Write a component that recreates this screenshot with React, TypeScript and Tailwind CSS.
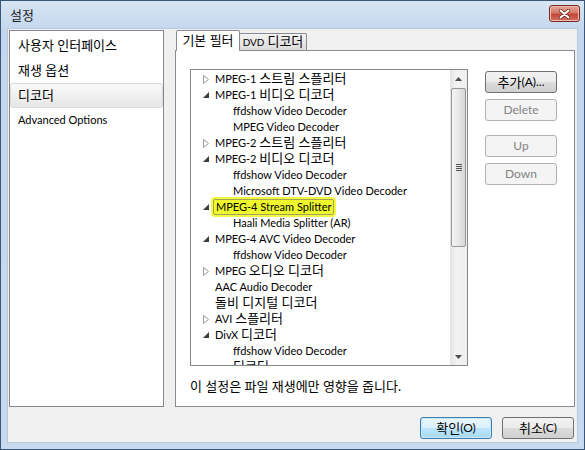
import type { ReactNode } from 'react'

// splits a label so that hangul runs get the slightly larger size they have in the dialog
function Txt({ s }: { s: string }) {
  const parts = s.split(/([\uAC00-\uD7A3][\uAC00-\uD7A3 ]*)/)
  return (
    <>
      {parts.map((p, i) =>
        /[\uAC00-\uD7A3]/.test(p) ? (
          <span key={i} className="text-[13px]">
            {p}
          </span>
        ) : (
          p
        )
      )}
    </>
  )
}

type Row = { text: string; level: 0 | 1; arrow?: 'open' | 'closed'; mark?: boolean }

const rows: Row[] = [
  { text: 'MPEG-1 스트림 스플리터', level: 0, arrow: 'closed' },
  { text: 'MPEG-1 비디오 디코더', level: 0, arrow: 'open' },
  { text: 'ffdshow Video Decoder', level: 1 },
  { text: 'MPEG Video Decoder', level: 1 },
  { text: 'MPEG-2 스트림 스플리터', level: 0, arrow: 'closed' },
  { text: 'MPEG-2 비디오 디코더', level: 0, arrow: 'open' },
  { text: 'ffdshow Video Decoder', level: 1 },
  { text: 'Microsoft DTV-DVD Video Decoder', level: 1 },
  { text: 'MPEG-4 Stream Splitter', level: 0, arrow: 'open', mark: true },
  { text: 'Haali Media Splitter (AR)', level: 1 },
  { text: 'MPEG-4 AVC Video Decoder', level: 0, arrow: 'open' },
  { text: 'ffdshow Video Decoder', level: 1 },
  { text: 'MPEG 오디오 디코더', level: 0, arrow: 'closed' },
  { text: 'AAC Audio Decoder', level: 0 },
  { text: '돌비 디지털 디코더', level: 0 },
  { text: 'AVI 스플리터', level: 0, arrow: 'closed' },
  { text: 'DivX 디코더', level: 0, arrow: 'open' },
  { text: 'ffdshow Video Decoder', level: 1 },
  { text: '디코더', level: 1 },
]

function Arrow({ kind }: { kind?: 'open' | 'closed' }) {
  if (kind === 'closed')
    return (
      <svg width="6" height="9" viewBox="0 0 6 9">
        <path d="M0.5 0.5 L5.5 4.5 L0.5 8.5 Z" fill="white" stroke="#9a9a9a" strokeWidth="1" />
      </svg>
    )
  if (kind === 'open')
    return (
      <svg width="6" height="6" viewBox="0 0 6 6">
        <path d="M6 0 L6 6 L0 6 Z" fill="#3c3c3c" />
      </svg>
    )
  return null
}

function Btn({ children, disabled, primary }: { children: ReactNode; disabled?: boolean; primary?: boolean }) {
  let cls =
    'border-[#707070] bg-[linear-gradient(#f2f2f2_0%,#ebebeb_50%,#dddddd_50%,#cfcfcf_100%)] text-black'
  if (disabled) cls = 'border-[#adb2b5] bg-[#f4f4f4] text-[#838383]'
  if (primary)
    cls =
      'border-[#3c7fb1] bg-[linear-gradient(#eaf6fd_0%,#d9f0fc_50%,#bee6fd_50%,#a7d9f5_100%)] text-black shadow-[inset_0_0_0_1px_#c8e6f8]'
  return (
    <div
      className={`w-[72px] h-[22px] rounded-[3px] border flex items-center justify-center text-[12px] leading-none ${cls}`}
    >
      {children}
    </div>
  )
}

export default function App() {
  return (
    <div className="w-[585px] h-[450px] overflow-hidden border border-[#3a5675] bg-[linear-gradient(180deg,#d7e5f4_0%,#c3d6ed_30px,#c8daef_100%)] font-['Lato','Noto_Sans_CJK_KR',sans-serif] text-[11px] text-black">
      {/* title bar */}
      <div className="h-[27px] flex items-start justify-between pl-[9px] pr-[4px]">
        <div className="mt-[5px] text-[13px] text-[#1b1b1b]">설정</div>
        <div className="mt-[4px] w-[31px] h-[17px] rounded-[3px] border border-[#7a2a22] bg-[linear-gradient(#e9a99b_0%,#d47a69_45%,#c2463a_55%,#d5705e_100%)] flex items-center justify-center shadow-[inset_0_0_0_1px_#f0b9ad]">
          <svg width="11" height="10" viewBox="0 0 11 10">
            <path d="M1.5 1.5 L9.5 8.5 M9.5 1.5 L1.5 8.5" stroke="#5a2018" strokeWidth="3.4" strokeLinecap="round" />
            <path d="M1.5 1.5 L9.5 8.5 M9.5 1.5 L1.5 8.5" stroke="white" strokeWidth="2" strokeLinecap="round" />
          </svg>
        </div>
      </div>

      {/* client area */}
      <div className="mx-[6px] h-[415px] border border-[#b7c9df] bg-[#f0f0f0] flex flex-col">
        <div className="flex mt-[1px] h-[377px]">
          {/* page list */}
          <div className="ml-[1px] w-[155px] h-full border border-[#828790] bg-white pt-[2px]">
            <div className="h-[25px] flex items-center pl-[8px] text-[13px]">사용자 인터페이스</div>
            <div className="h-[25px] flex items-center pl-[8px] text-[13px]">재생 옵션</div>
            <div className="h-[25px] flex items-center pl-[7px] text-[13px] rounded-[3px] border border-[#d9d9d9] bg-[linear-gradient(#fafafa,#e6e6e6)]">
              디코더
            </div>
            <div className="h-[25px] flex items-center pl-[8px] text-[11px]">Advanced Options</div>
          </div>

          {/* tab control */}
          <div className="ml-[11px] w-[400px] flex flex-col">
            <div className="h-[20px] flex items-end pl-[1px]">
              <div className="relative z-10 -mb-px w-[64px] h-[21px] border border-b-0 border-[#898c95] bg-white flex items-center justify-center text-[13px] rounded-t-[2px]">
                기본 필터
              </div>
              <div className="-ml-px w-[68px] h-[17px] border border-b-0 border-[#898c95] bg-[linear-gradient(#f3f3f3,#dcdcdc)] flex items-center justify-center rounded-t-[2px]">
                <span className="text-[10px]">DVD</span>
                <span className="text-[13px] ml-[3px]">디코더</span>
              </div>
            </div>
            <div className="h-[357px] border border-[#898c95] bg-white pl-[14px] pt-[18px]">
              <div className="flex items-start">
                {/* tree */}
                <div className="w-[278px] h-[297px] border border-[#828790] flex overflow-hidden">
                  <div className="flex-1 flex flex-col overflow-hidden pt-[1px]">
                    {rows.map((r, i) => (
                      <div
                        key={i}
                        className={`h-[16px] shrink-0 flex items-center whitespace-nowrap ${r.level === 1 ? 'pl-[42px]' : 'pl-[9px]'}`}
                      >
                        {r.level === 0 && (
                          <div className="w-[15px] h-[16px] flex items-center justify-center pr-[3px]">
                            <Arrow kind={r.arrow} />
                          </div>
                        )}
                        {r.mark ? (
                          <span className="-ml-[2px] px-[2px] h-[16px] flex items-center border border-[#a3a35a] rounded-[2px] bg-[#eef82c] shadow-[0_0_0_2px_#f2fa40]">
                            <Txt s={r.text} />
                          </span>
                        ) : (
                          <span>
                            <Txt s={r.text} />
                          </span>
                        )}
                      </div>
                    ))}
                  </div>
                  {/* scrollbar */}
                  <div className="w-[17px] h-full flex flex-col bg-[linear-gradient(90deg,#e3e3e3,#f3f3f3_40%,#eeeeee)]">
                    <div className="h-[17px] flex items-center justify-center">
                      <svg width="7" height="4" viewBox="0 0 7 4">
                        <path d="M0 4 L3.5 0 L7 4 Z" fill="#4d4d4d" />
                      </svg>
                    </div>
                    <div className="mt-[1px] mx-px h-[159px] rounded-[2px] border border-[#979797] bg-[linear-gradient(90deg,#f4f4f4,#e7e7e7_50%,#d6d6d6)] flex items-center justify-center">
                      <div className="flex flex-col gap-[1px]">
                        <div className="w-[6px] h-px bg-[#555]" />
                        <div className="w-[6px] h-px bg-[#555]" />
                        <div className="w-[6px] h-px bg-[#555]" />
                        <div className="w-[6px] h-px bg-[#555]" />
                      </div>
                    </div>
                    <div className="flex-1" />
                    <div className="h-[17px] flex items-center justify-center">
                      <svg width="7" height="4" viewBox="0 0 7 4">
                        <path d="M0 0 L7 0 L3.5 4 Z" fill="#4d4d4d" />
                      </svg>
                    </div>
                  </div>
                </div>

                {/* side buttons */}
                <div className="ml-[17px] mt-[2px] flex flex-col">
                  <Btn>
                    <Txt s="추가(A)..." />
                  </Btn>
                  <div className="mt-[6px]">
                    <Btn disabled>Delete</Btn>
                  </div>
                  <div className="mt-[14px]">
                    <Btn disabled>Up</Btn>
                  </div>
                  <div className="mt-[6px]">
                    <Btn disabled>Down</Btn>
                  </div>
                </div>
              </div>
              <div className="mt-[12px] text-[13px] leading-[16px]">이 설정은 파일 재생에만 영향을 줍니다.</div>
            </div>
          </div>
        </div>

        {/* dialog buttons */}
        <div className="mt-[10px] flex justify-end gap-[10px] pr-[3px]">
          <Btn primary>
            <Txt s="확인(O)" />
          </Btn>
          <Btn>
            <Txt s="취소(C)" />
          </Btn>
        </div>
      </div>
    </div>
  )
}
